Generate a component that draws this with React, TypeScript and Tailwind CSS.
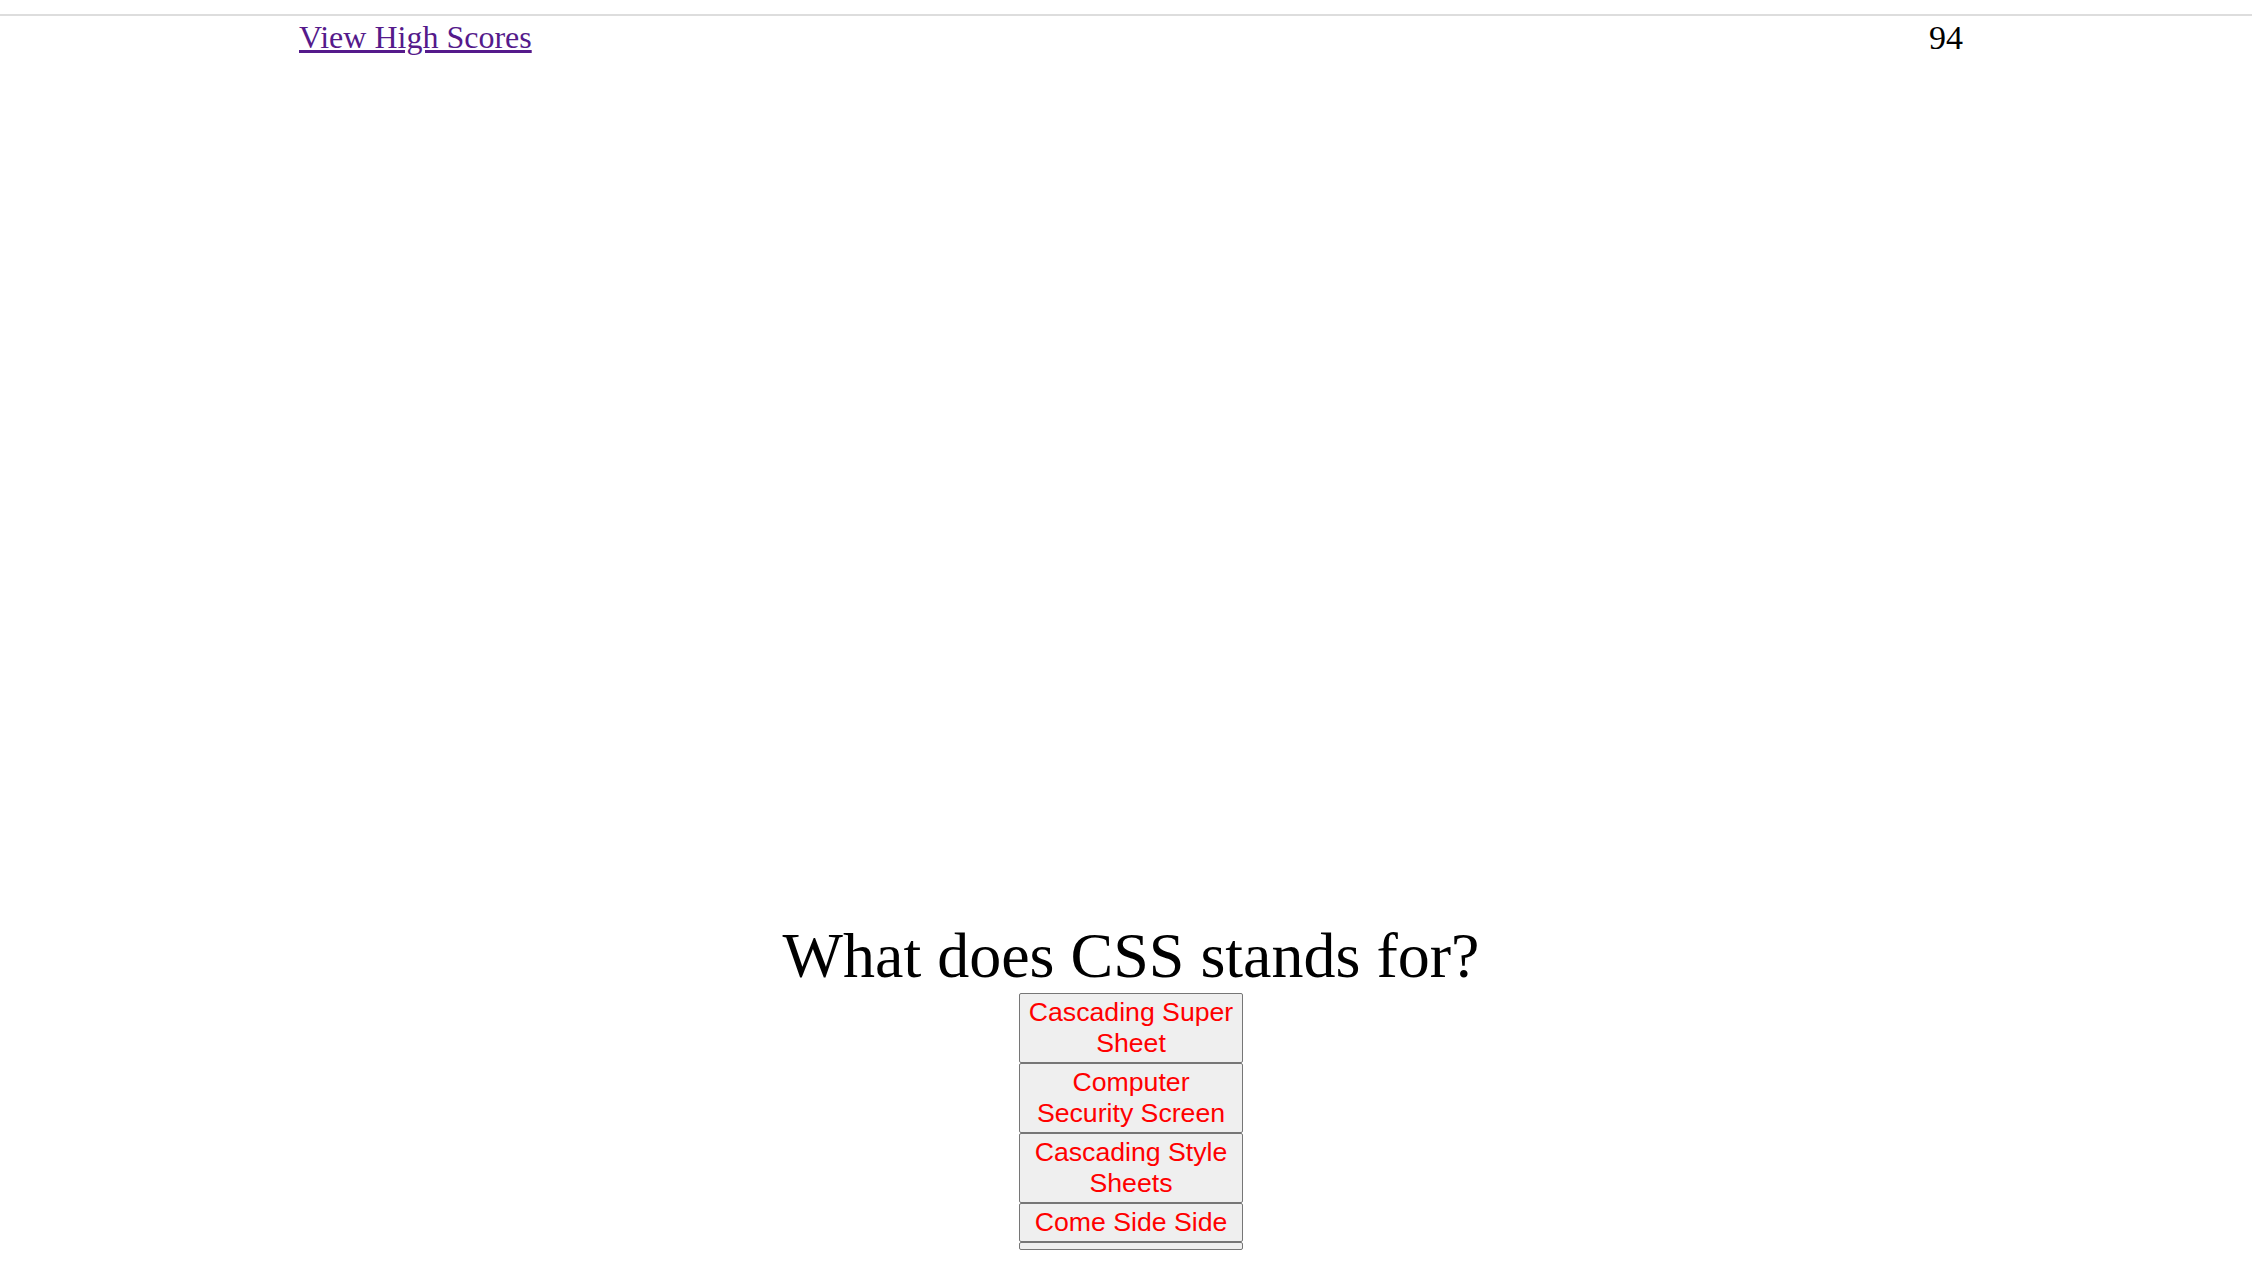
import React from "react";

const answers = [
  "Cascading Super Sheet",
  "Computer Security Screen",
  "Cascading Style Sheets",
  "Come Side Side",
  "",
];

export default function App() {
  return (
    <div className="min-h-[1286px] bg-white" style={{ fontFamily: '"Liberation Serif", serif' }}>
      <div className="pt-[14px]">
        <div className="border-t-2 border-[#dddddd]" />
        <div className="flex justify-between items-start pt-[3px] pl-[299px] pr-[289px] text-[32px] leading-[normal] text-black">
          <a href="#" className="text-[#551a8b] underline">View High Scores</a>
          <span className="text-[34px] leading-[normal]">94</span>
        </div>
      </div>
      <div className="mt-[862px] pl-[10px] flex flex-col items-center">
        <h1 className="text-[64px] leading-[normal] font-normal text-black">What does CSS stands for?</h1>
        <div className="flex flex-col items-center">
          {answers.map((a, i) => (
            <button
              key={i}
              className="w-[224px] px-[7px] py-[3px] border border-[#767676] rounded-[2px] bg-[#efefef] text-[#ff0000] text-[26.67px] leading-[normal] text-center"
              style={{ fontFamily: '"Liberation Sans", Arial, sans-serif', minHeight: a ? undefined : 7 }}
            >
              {a}
            </button>
          ))}
        </div>
      </div>
    </div>
  );
}
